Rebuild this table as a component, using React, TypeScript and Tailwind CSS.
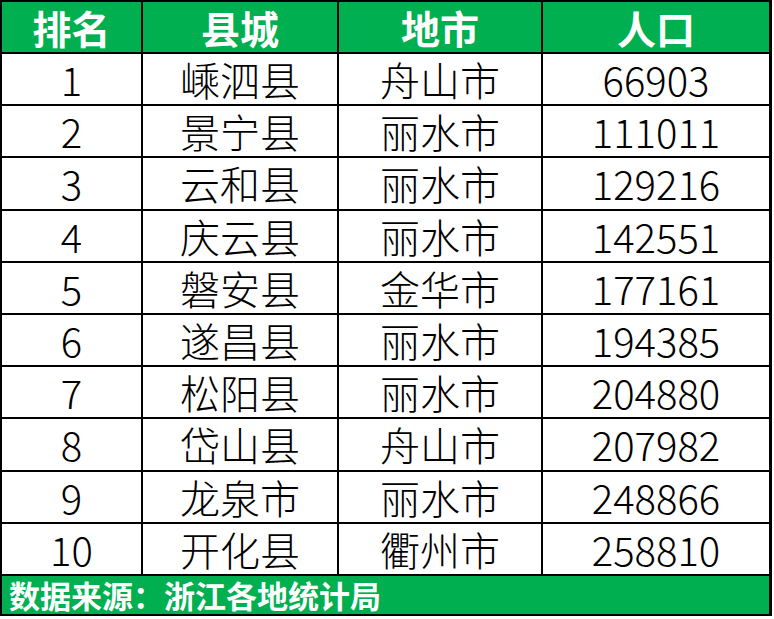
import React from "react";

const rows: [string, string, string, string][] = [
  ["1", "嵊泗县", "舟山市", "66903"],
  ["2", "景宁县", "丽水市", "111011"],
  ["3", "云和县", "丽水市", "129216"],
  ["4", "庆云县", "丽水市", "142551"],
  ["5", "磐安县", "金华市", "177161"],
  ["6", "遂昌县", "丽水市", "194385"],
  ["7", "松阳县", "丽水市", "204880"],
  ["8", "岱山县", "舟山市", "207982"],
  ["9", "龙泉市", "丽水市", "248866"],
  ["10", "开化县", "衢州市", "258810"],
];

const headers = ["排名", "县城", "地市", "人口"];

export default function App() {
  return (
    <div
      className="w-[774px] h-[619px] bg-white"
      style={{ fontFamily: '"Noto Sans CJK SC", "Noto Sans", sans-serif' }}
    >
      <div className="w-[772px] grid grid-cols-[139px_194px_202px_226px] gap-[2px] bg-black pt-[2px] pl-[2px] pr-[3px] pb-[2px]">
        {headers.map((h) => (
          <div
            key={h}
            className="h-[50px] bg-[#00b050] text-white font-bold text-[39px] leading-none flex items-center justify-center"
          >
            {h}
          </div>
        ))}
        {rows.map((r) =>
          r.map((c, i) => (
            <div
              key={r[0] + "-" + i}
              className="h-[50.2px] bg-white text-black font-light text-[40px] leading-none flex items-center justify-center"
            >
              {c}
            </div>
          ))
        )}
        <div className="col-span-4 h-[38px] bg-[#00b050] text-white font-bold text-[31px] leading-none flex items-center pl-[7px]">
          数据来源：浙江各地统计局
        </div>
      </div>
    </div>
  );
}
